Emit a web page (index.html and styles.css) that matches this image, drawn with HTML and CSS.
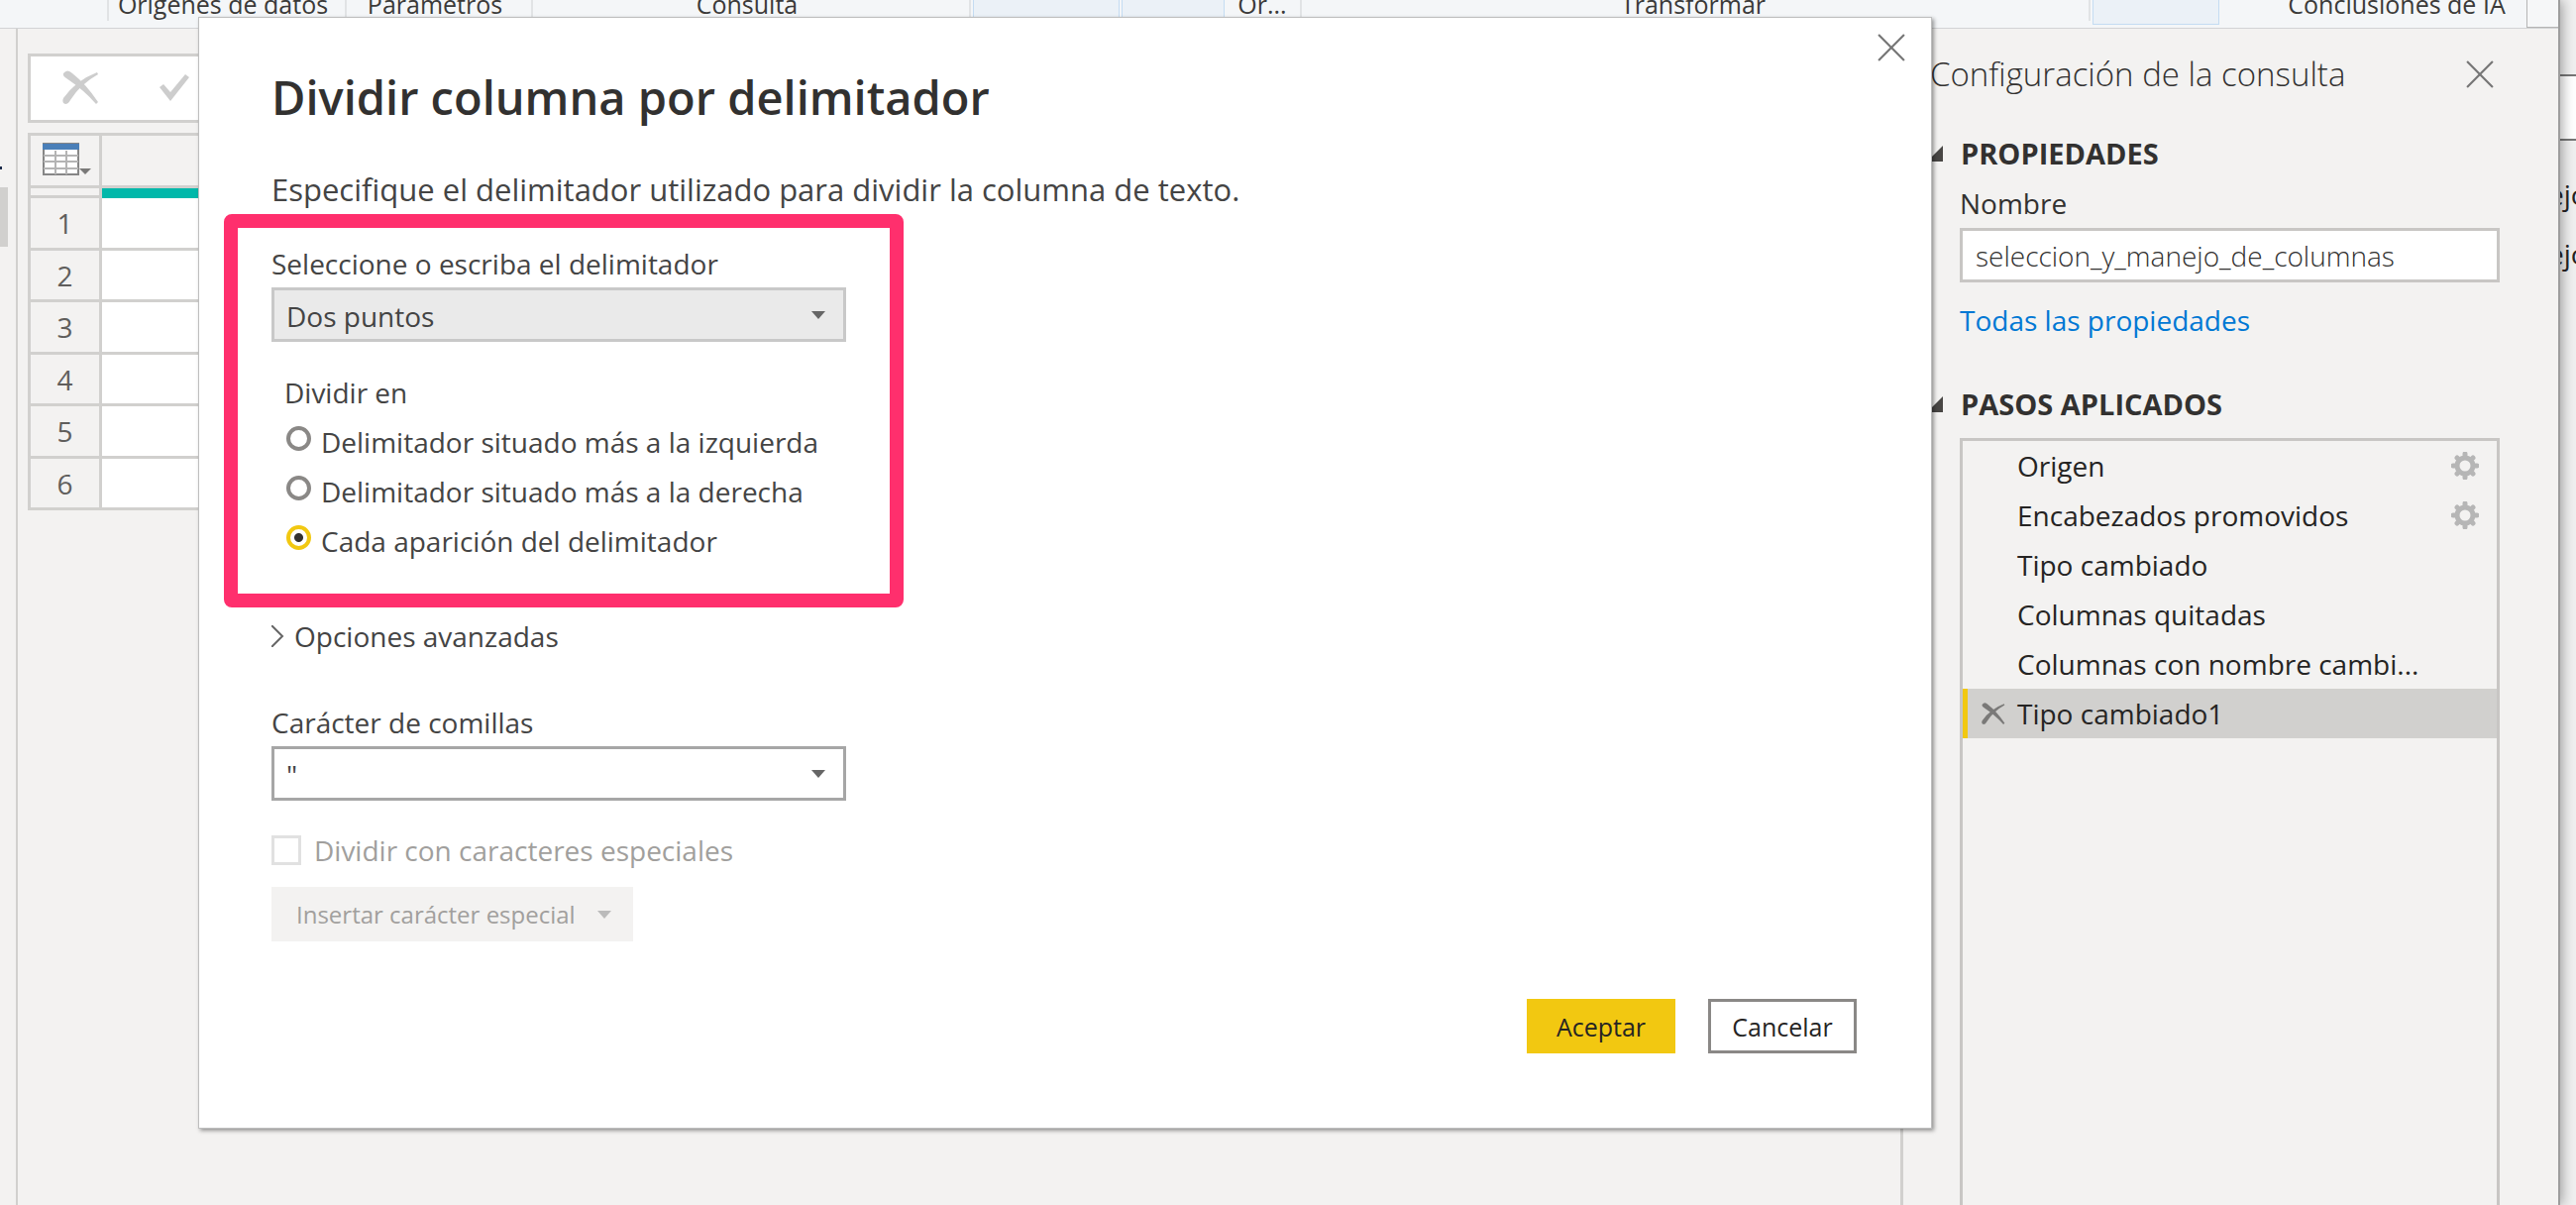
FILE: index.html
```html
<!DOCTYPE html>
<html lang="es">
<head>
<meta charset="utf-8">
<title>Dividir columna por delimitador</title>
<link rel="stylesheet" href="styles.css">
</head>
<body>
<div class="app">
  <div class="window">
    <header class="ribbon">
      <div class="group group-start"></div>
      <div class="group group-sources">Orígenes de datos</div>
      <div class="group group-params">Parámetros</div>
      <div class="group group-query">Consulta</div>
      <div class="tile tile-wide"></div>
      <div class="tile tile-next"></div>
      <div class="group group-org">Or...</div>
      <div class="group group-transform">Transformar</div>
      <div class="tile tile-combine"></div>
      <div class="group group-ai">Conclusiones de IA</div>
      <div class="ribbon-end"></div>
    </header>
    <div class="workspace">
      <aside class="queries"><span class="dot"></span><span class="current"></span></aside>
      <main class="editor">
        <div class="formula">
          <svg class="icon-cancel" width="37" height="34" viewBox="0 0 37 34"><path d="M1 3Q5-2 10 3Q24 14 36 32L34 34Q22 20 4 8Q0 6 1 3Z"/><path d="M36 4L35 2Q14 10 1 28Q-1 33 3 34Q6 34 8 30Q18 14 36 4Z"/></svg>
          <svg class="icon-check" width="32" height="28" viewBox="0 0 32 28"><path d="M1 14L5 11L12 19L27 1L31 4L12 28Z"/></svg>
        </div>
        <table class="grid">
          <tr class="grid-head"><th><svg width="50" height="34" viewBox="0 0 50 34"><path d="M1 1H36V32H1Z" fill="#fff" stroke="#868686" stroke-width="2"/><path d="M1 13H36M1 19H36M1 26H36M13 8V32M24 8V32" stroke="#b4b4b4" stroke-width="2" fill="none"/><path d="M0 1H37V7H0Z" fill="#4a7fb8"/><path d="M37 26H49L43 32Z" fill="#7a7978"/></svg></th><td></td></tr>
          <tr class="grid-bar"><th></th><td></td></tr>
          <tr><th>1</th><td></td></tr>
          <tr><th>2</th><td></td></tr>
          <tr><th>3</th><td></td></tr>
          <tr><th>4</th><td></td></tr>
          <tr><th>5</th><td></td></tr>
          <tr><th>6</th><td></td></tr>
        </table>
      </main>
      <aside class="settings">
        <div class="settings-head">
          <h2>Configuración de la consulta</h2>
          <button class="close" aria-label="Cerrar panel"><svg width="28" height="28" viewBox="0 0 26 26"><path d="M1 1L25 25M25 1L1 25"/></svg></button>
        </div>
        <h3 class="section"><svg class="tri" width="18" height="18" viewBox="0 0 18 18"><path d="M17 1V17H1Z"/></svg>PROPIEDADES</h3>
        <label class="name-label" for="name">Nombre</label>
        <input class="name" id="name" type="text" value="seleccion_y_manejo_de_columnas">
        <a class="all" href="#">Todas las propiedades</a>
        <h3 class="section"><svg class="tri" width="18" height="18" viewBox="0 0 18 18"><path d="M17 1V17H1Z"/></svg>PASOS APLICADOS</h3>
        <ul class="steps">
          <li><span>Origen</span><svg class="gear" width="28" height="28" viewBox="-14 -14 28 28"><circle r="8"/><path d="M0-12V-9M0 12V9M-12 0H-9M12 0H9M-8-8L-6-6M8 8L6 6M-8 8L-6 6M8-8L6-6"/></svg></li>
          <li><span>Encabezados promovidos</span><svg class="gear" width="28" height="28" viewBox="-14 -14 28 28"><circle r="8"/><path d="M0-12V-9M0 12V9M-12 0H-9M12 0H9M-8-8L-6-6M8 8L6 6M-8 8L-6 6M8-8L6-6"/></svg></li>
          <li><span>Tipo cambiado</span></li>
          <li><span>Columnas quitadas</span></li>
          <li><span>Columnas con nombre cambi...</span></li>
          <li class="selected"><svg class="remove" width="24" height="24" viewBox="0 0 37 34"><path d="M1 3Q5-2 10 3Q24 14 36 32L34 34Q22 20 4 8Q0 6 1 3Z"/><path d="M36 4L35 2Q14 10 1 28Q-1 33 3 34Q6 34 8 30Q18 14 36 4Z"/></svg><span>Tipo cambiado1</span></li>
        </ul>
      </aside>
    </div>
  </div>
  <div class="behind">
    <div class="behind-field"></div>
    <p>ejo</p>
    <p>ejo</p>
  </div>

  <form class="dialog" role="dialog" aria-labelledby="title">
    <button class="close dialog-close" type="button" aria-label="Cerrar"><svg width="28" height="28" viewBox="0 0 26 26"><path d="M1 1L25 25M25 1L1 25"/></svg></button>
    <h1 id="title">Dividir columna por delimitador</h1>
    <p class="intro">Especifique el delimitador utilizado para dividir la columna de texto.</p>
    <section class="delimiter">
      <label class="label" for="delim">Seleccione o escriba el delimitador</label>
      <div class="combo"><select class="select select-hover" id="delim"><option>Dos puntos</option></select><svg class="caret" width="14" height="8" viewBox="0 0 14 8"><path d="M0 0H14L7 8Z"/></svg></div>
      <fieldset class="split">
        <legend>Dividir en</legend>
        <label><input type="radio" name="split"><span>Delimitador situado más a la izquierda</span></label>
        <label><input type="radio" name="split"><span>Delimitador situado más a la derecha</span></label>
        <label><input type="radio" name="split" checked><span>Cada aparición del delimitador</span></label>
      </fieldset>
    </section>
    <button class="advanced" type="button"><svg width="13" height="22" viewBox="0 0 13 22"><path d="M0 0L11 11L0 22"/></svg>Opciones avanzadas</button>
    <label class="label" for="quote">Carácter de comillas</label>
    <div class="combo"><select class="select" id="quote"><option>"</option></select><svg class="caret" width="14" height="8" viewBox="0 0 14 8"><path d="M0 0H14L7 8Z"/></svg></div>
    <label class="special"><input type="checkbox" disabled><span>Dividir con caracteres especiales</span></label>
    <button class="insert" type="button" disabled>Insertar carácter especial<svg width="14" height="8" viewBox="0 0 14 8"><path d="M0 0H14L7 8Z"/></svg></button>
    <footer class="actions">
      <button class="accept" type="button">Aceptar</button>
      <button class="cancel" type="button">Cancelar</button>
    </footer>
  </form>
</div>
</body>
</html>
```
FILE: styles.css
```css
* { box-sizing: border-box; }
body { margin: 0; font: 28px/40px "Open Sans", "Noto Sans", sans-serif; color: #3b3a39; background: #f3f2f1; }
h1, h2, h3, p, ul { margin: 0; padding: 0; font-weight: 400; }
button, input, select { font: inherit; color: inherit; }
button { padding: 0; border: 0; background: none; }

.app { position: relative; display: flex; height: 100vh; overflow: hidden; }
.window { flex: 1; min-width: 0; display: flex; flex-direction: column; border-right: 2px solid #9d9d9d; box-shadow: 2px 0 12px rgba(0, 0, 0, .35); z-index: 1; background: #f3f2f1; }

/* Ribbon */
.ribbon { flex: none; display: flex; height: 29px; overflow: hidden; border-bottom: 1px solid #d2d3d5; background: #f4f6f8; font-size: 25px; white-space: nowrap; }
.group { height: 21px; border-right: 2px solid #e1e3e5; line-height: 8px; text-align: center; }
.group-start { width: 110px; }
.group-sources { width: 240px; padding-right: 8px; }
.group-params { width: 188px; padding-right: 8px; }
.group-query { width: 442px; margin-right: 2px; padding-right: 8px; }
.tile { height: 25px; border: 1px solid #c4dcf2; border-top: 0; background: #ebf1f7; }
.tile-wide { width: 148px; }
.tile-next { width: 104px; margin-left: 2px; }
.group-org { width: 78px; }
.group-transform { flex: 1; padding-right: 4px; }
.tile-combine { width: 128px; margin-left: 2px; }
.group-ai { width: 310px; padding-left: 48px; border: 0; }
.ribbon-end { width: 32px; border: 1px solid #b5b5b5; border-width: 0 0 1px 1px; background: #f6f7f8; }

/* Workspace */
.workspace { flex: 1; display: flex; min-height: 0; }
.queries { flex: none; width: 18px; border-right: 2px solid #d1d0ce; }
.dot { display: block; width: 2px; height: 3px; margin-top: 139px; background: #1b2a4a; }
.current { display: block; width: 8px; height: 60px; margin-top: 18px; background: #d1d0ce; }
.editor { flex: 1; min-width: 0; padding: 25px 0 0 10px; }
.formula { display: flex; align-items: center; gap: 60px; height: 70px; padding: 0 0 3px 32px; border: 3px solid #d1d0ce; background: #fff; }
.formula svg { fill: #cdcdcd; }
.grid { width: 100%; margin-top: 10px; border-collapse: collapse; color: #605e5c; }
.grid th, .grid td { height: 52px; padding: 0; border: 3px solid #d1d0ce; font-weight: 400; }
.grid th { width: 72px; }
.grid td { background: #fff; }
.grid tr:nth-child(odd) th { height: 53px; }
.grid .grid-head th, .grid .grid-head td { height: 51px; }
.grid .grid-head td { background: #f3f2f1; }
.grid svg { display: block; margin: 0 0 2px 12px; }
.grid .grid-bar th { height: 10px; }
.grid .grid-bar td { height: 10px; border-bottom-color: #01b8aa; background: #01b8aa; }

/* Query settings */
.settings { flex: none; width: 664px; display: flex; flex-direction: column; padding: 24px 59px 0 57px; border-left: 3px solid #d1d0ce; color: #323130; }
.settings-head { display: flex; align-items: center; justify-content: space-between; margin: 0 6px 33px -30px; }
.settings-head h2 { font-size: 33px; line-height: 44px; font-weight: 300; }
.close { display: block; }
.close svg { display: block; fill: none; stroke: #767676; stroke-width: 2; }
.section { display: flex; align-items: center; gap: 17px; margin-left: -34px; font-size: 29px; line-height: 50px; font-weight: 700; }
.tri { fill: #484644; }
.name-label { line-height: 50px; }
.name { width: 100%; height: 55px; padding: 0 13px; border: 3px solid #c8c6c4; border-radius: 0; background: #fff; font-weight: 300; }
.all { margin: 18px 0 40px; color: #0078d4; text-decoration: none; }
.steps { flex: 1; margin-top: 9px; border: 3px solid #c8c6c4; border-bottom: 0; list-style: none; color: #252423; }
.steps li { display: flex; align-items: center; height: 50px; padding: 0 18px 0 55px; }
.steps li.selected { padding-left: 14px; border-left: 5px solid #f2c811; background: #d1d0ce; }
.steps span { flex: 1; white-space: nowrap; }
.remove { margin-right: 12px; fill: #7a7978; }
.gear { fill: none; stroke: #b6b6b6; stroke-width: 5; stroke-linecap: round; }

/* Window behind */
.behind { flex: none; width: 16px; overflow: hidden; padding-top: 75px; background: #f0f0f0; color: #252423; }
.behind-field { height: 67px; margin-bottom: 34px; border: 2px solid #767676; border-width: 2px 0; background: #fff; }
.behind p { height: 60px; margin-left: -12px; }

/* Dialog */
.dialog { position: absolute; z-index: 2; top: 17px; left: 200px; right: 650px; min-height: 1122px; padding: 50px 75px 0 73px; border: 1px solid #bebebe; background: #fff; box-shadow: 2px 2px 4px rgba(0, 0, 0, .4); color: #444; }
.dialog-close { position: absolute; top: 16px; right: 26px; }
.dialog h1 { font-size: 47px; line-height: 60px; font-weight: 600; color: #323130; }
.intro { margin: 42px 0 3px; font-size: 31px; line-height: 43px; }
.delimiter { width: 686px; height: 397px; margin-left: -48px; padding: 16px 34px; border: 14px solid #ff2f6d; border-radius: 8px; }
.label { display: block; margin-bottom: 4px; }
.combo { position: relative; width: 580px; }
.select { display: block; width: 100%; height: 55px; padding: 2px 12px 0; border: 3px solid #a6a6a6; border-radius: 0; background: #fff; appearance: none; }
.select-hover { border-color: #c8c8c8; background: #eaeaea; }
.caret { position: absolute; top: 24px; right: 21px; fill: #666; }
.split { margin: 31px 0 0; padding: 0 0 0 13px; border: 0; }
.split legend { padding: 0; margin-bottom: 6px; }
.split label { display: flex; align-items: flex-start; gap: 10px; height: 50px; line-height: 48px; }
.split input { flex: none; appearance: none; width: 25px; height: 25px; margin: 8px 0 0 2px; border: 4px solid #8a8886; border-radius: 50%; background: #fff; }
.split input:checked { border-color: #f2c811; background: radial-gradient(circle, #323130 4px, #fff 5px); }
.advanced { display: flex; align-items: center; gap: 10px; margin: 9px 0 47px; }
.advanced svg { fill: none; stroke: #666; stroke-width: 2; }
.special { display: flex; align-items: center; gap: 13px; margin-top: 30px; color: #a19f9d; }
.special input { appearance: none; width: 30px; height: 30px; margin: 0; border: 3px solid #e1e1e1; background: #fff; }
.insert { display: flex; align-items: center; gap: 22px; height: 55px; margin-top: 17px; padding: 0 22px 0 25px; background: #f3f2f1; color: #a19f9d; font-size: 24px; }
.insert svg { fill: #bbb; }
.actions { display: flex; justify-content: flex-end; gap: 33px; margin-top: 58px; color: #252423; font-size: 25px; }
.actions button { width: 150px; height: 55px; }
.accept { background: #f2c811; }
.actions .cancel { border: 3px solid #8a8886; }
```
